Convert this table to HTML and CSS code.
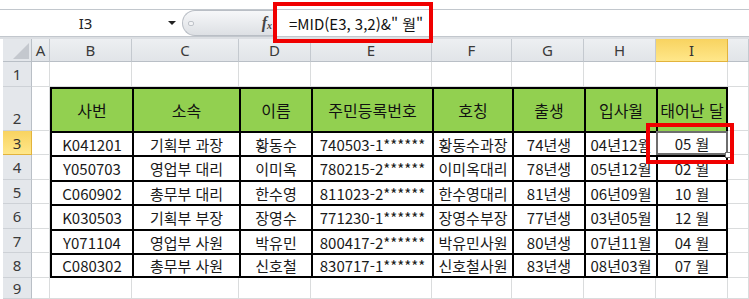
FILE: index.html
```html
<!DOCTYPE html>
<html lang="ko">
<head>
<meta charset="utf-8">
<title>Excel MID</title>
<link rel="stylesheet" href="styles.css">
</head>
<body>
<div class="app">
  <div class="topbar">
    <div class="fbar">
      <div class="namebox"><span class="name">I3</span><span class="dd"></span></div>
      <div class="pill"><span class="grip"></span><span class="fx"><i>f</i><sub>x</sub></span></div>
      <div class="formula">=MID(E3, 3,2)&amp;" 월"</div>
    </div>
  </div>
  <div class="sheet">
    <div class="c corner"><svg width="16" height="16" viewBox="0 0 16 16"><polygon points="16,0 16,16 0,16" fill="#C4C8CE"/></svg></div>
    <div class="c ch">A</div><div class="c ch">B</div><div class="c ch">C</div><div class="c ch">D</div><div class="c ch">E</div><div class="c ch">F</div><div class="c ch">G</div><div class="c ch">H</div><div class="c ch sel">I</div><div class="c ch"></div>

    <div class="c rh">1</div>
    <div class="c"></div><div class="c"></div><div class="c"></div><div class="c"></div><div class="c"></div><div class="c"></div><div class="c"></div><div class="c"></div><div class="c"></div><div class="c"></div>

    <div class="c rh rh2">2</div>
    <div class="c"></div>
    <div class="c t th">사번</div><div class="c t th">소속</div><div class="c t th">이름</div><div class="c t th">주민등록번호</div><div class="c t th">호칭</div><div class="c t th">출생</div><div class="c t th">입사월</div><div class="c t th r">태어난 달</div>
    <div class="c"></div>

    <div class="c rh sel">3</div>
    <div class="c"></div>
    <div class="c t">K041201</div><div class="c t">기획부 과장</div><div class="c t">황동수</div><div class="c t">740503-1******</div><div class="c t">황동수과장</div><div class="c t">74년생</div><div class="c t">04년12월</div><div class="c t r active">05 월</div>
    <div class="c"></div>

    <div class="c rh">4</div>
    <div class="c"></div>
    <div class="c t">Y050703</div><div class="c t">영업부 대리</div><div class="c t">이미옥</div><div class="c t">780215-2******</div><div class="c t">이미옥대리</div><div class="c t">78년생</div><div class="c t">05년12월</div><div class="c t r">02 월</div>
    <div class="c"></div>

    <div class="c rh">5</div>
    <div class="c"></div>
    <div class="c t">C060902</div><div class="c t">총무부 대리</div><div class="c t">한수영</div><div class="c t">811023-2******</div><div class="c t">한수영대리</div><div class="c t">81년생</div><div class="c t">06년09월</div><div class="c t r">10 월</div>
    <div class="c"></div>

    <div class="c rh">6</div>
    <div class="c"></div>
    <div class="c t">K030503</div><div class="c t">기획부 부장</div><div class="c t">장영수</div><div class="c t">771230-1******</div><div class="c t">장영수부장</div><div class="c t">77년생</div><div class="c t">03년05월</div><div class="c t r">12 월</div>
    <div class="c"></div>

    <div class="c rh">7</div>
    <div class="c"></div>
    <div class="c t">Y071104</div><div class="c t">영업부 사원</div><div class="c t">박유민</div><div class="c t">800417-2******</div><div class="c t">박유민사원</div><div class="c t">80년생</div><div class="c t">07년11월</div><div class="c t r">04 월</div>
    <div class="c"></div>

    <div class="c rh">8</div>
    <div class="c"></div>
    <div class="c t b">C080302</div><div class="c t b">총무부 사원</div><div class="c t b">신호철</div><div class="c t b">830717-1******</div><div class="c t b">신호철사원</div><div class="c t b">83년생</div><div class="c t b">08년03월</div><div class="c t b r">07 월</div>
    <div class="c"></div>

    <div class="c rh">9</div>
    <div class="c"></div><div class="c"></div><div class="c"></div><div class="c"></div><div class="c"></div><div class="c"></div><div class="c"></div><div class="c"></div><div class="c"></div><div class="c"></div>
  </div>
  <div class="handle"></div>
  <div class="mark mark-formula"></div>
  <div class="mark mark-cell"></div>
</div>
</body>
</html>
```

FILE: styles.css
```css
* { box-sizing: border-box; margin: 0; padding: 0; }
html, body { width: 749px; height: 299px; overflow: hidden; background: #fff; }
body { font-family: "Noto Sans CJK KR", "Noto Sans", sans-serif; color: #1f1f1f; }
.app { position: relative; width: 749px; height: 299px; overflow: hidden; }

.topbar { height: 39px; padding-top: 9px; background: #fff; border-bottom: 2px solid #DCDFE3; }
.fbar { height: 28px; display: flex; border-top: 1px solid #C2C7CD; border-bottom: 1px solid #C2C7CD; background: #fff; }
.namebox { margin-left: 3px; width: 177px; display: flex; align-items: center; background: #fff; }
.name { flex: 1; text-align: center; font-family: "Noto Sans", sans-serif; font-size: 15px; color: #222; }
.dd { width: 0; height: 0; border-left: 4px solid transparent; border-right: 4px solid transparent; border-top: 4px solid #222; margin-right: 4px; }
.pill { margin-left: 2px; width: 94px; display: flex; align-items: center; border: 1px solid #B9BEC5; border-right: 0; border-radius: 13px 0 0 13px; background: linear-gradient(#F6F7F9, #DDE0E4); }
.grip { width: 6px; height: 5px; margin-left: 5px; border: 1px solid #BFC3C9; border-radius: 2px; background: #F2F3F5; }
.fx { margin-left: auto; margin-right: 4px; font-family: "Liberation Serif", serif; font-style: italic; font-weight: bold; font-size: 16px; color: #444; line-height: 1; }
.fx i { font-style: italic; }
.fx sub { font-size: 10px; vertical-align: -1px; }
.formula { flex: 1; display: flex; align-items: center; padding-left: 12px; background: #fff; border-left: 1px solid #C9CDD3; font-size: 15px; color: #111; white-space: pre; }

.sheet { display: grid; margin-left: 3px; grid-template-columns: 29px 18px 82px 107px 72px 121px 80px 72px 72px 72px 1fr; grid-template-rows: 23px 25px 44px 24px 25px 24px 25px 24px 25px 21px; }
.c { display: flex; align-items: center; justify-content: center; white-space: nowrap; overflow: hidden; font-size: 15px; border-right: 1px solid #DADCDD; border-bottom: 1px solid #DADCDD; background: #fff; }
.corner { background: #E4E7EB; border-right: 1px solid #B9BFC6; border-bottom: 1px solid #B9BFC6; justify-content: flex-end; align-items: flex-end; padding: 0 2px 2px 0; }
.ch { background: linear-gradient(#EDEFF2, #E1E4E8); border-right: 1px solid #C4C9CF; border-bottom: 1px solid #B9BFC6; font-family: "Noto Sans", sans-serif; color: #3a3a3a; }
.rh { background: #E4E7EB; border-right: 1px solid #B9BFC6; border-bottom: 1px solid #CDD1D6; font-family: "Noto Sans", sans-serif; color: #3a3a3a; }
.rh2 { align-items: flex-end; padding-bottom: 2px; }
.ch.sel, .rh.sel { background: linear-gradient(#F8D360, #FFE78A); border-color: #E2B33C; color: #333; }

.t { border-left: 2px solid #000; border-top: 2px solid #000; border-right: 0; border-bottom: 0; color: #1a1a1a; }
.t.r { border-right: 2px solid #000; }
.t.b { border-bottom: 2px solid #000; }
.th { background: #92D050; font-size: 16px; color: #111; }
.t.active { border-color: #6E6E6E; border-bottom: 2px solid #6E6E6E; }

.handle { position: absolute; left: 725px; top: 152px; width: 6px; height: 6px; background: #fff; border: 1px solid #6E6E6E; }
.mark { position: absolute; border: 4px solid #F00000; }
.mark-formula { left: 273px; top: 2px; width: 160px; height: 41px; }
.mark-cell { left: 646px; top: 123px; width: 88px; height: 41px; }
```
